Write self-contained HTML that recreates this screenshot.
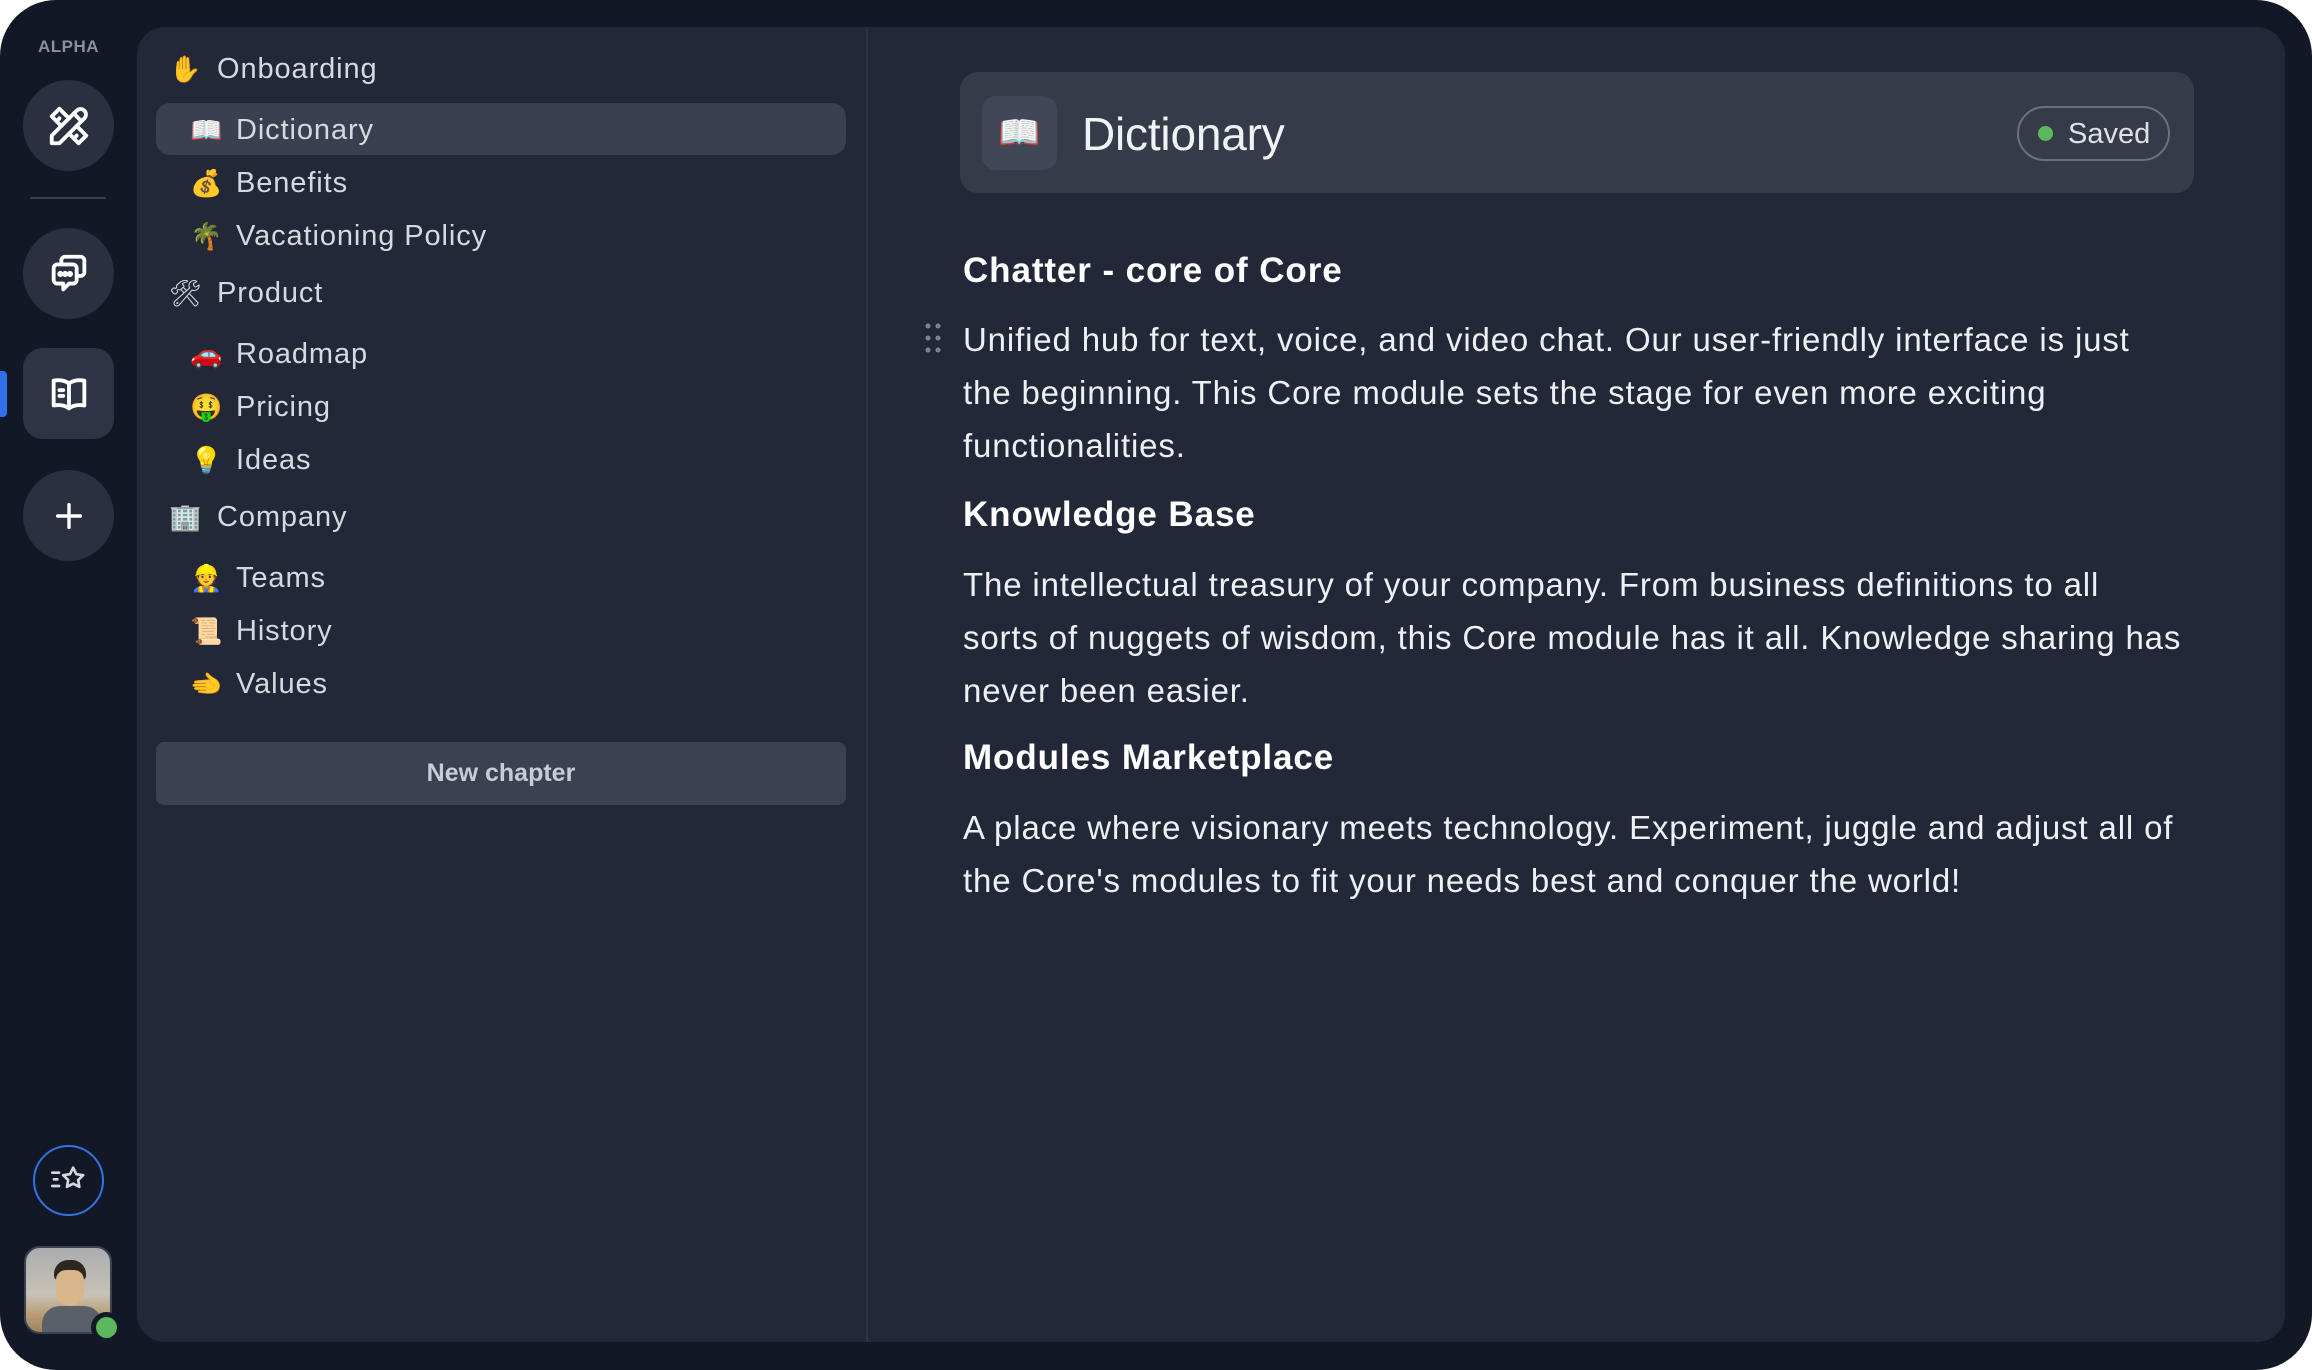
<!DOCTYPE html>
<html><head><meta charset="utf-8"><style>
*{margin:0;padding:0;box-sizing:border-box}
html,body{width:2312px;height:1370px;background:#fff;overflow:hidden}
body{font-family:"Liberation Sans","Noto Sans CJK JP",sans-serif}
#frame{position:absolute;left:0;top:0;width:2312px;height:1370px;background:#121826;border-radius:56px}
.abs{position:absolute}
#panel{left:137px;top:27px;width:2148px;height:1315px;background:#222837;border-radius:28px}
#divider{left:866px;top:27px;width:2px;height:1315px;background:#2c3242}
.rbtn{position:absolute;left:23px;width:91px;height:91px;border-radius:50%;background:#2a3040;display:flex;align-items:center;justify-content:center}
.it{position:absolute;font-size:29px;color:#d6d9df;white-space:nowrap;line-height:40px;letter-spacing:0.9px}
.it .e{position:absolute;font-size:26px;letter-spacing:0}
.sub .e{left:-46px}
.top .e{left:-48px}
.txt{position:absolute;left:963px;color:#eef0f3;white-space:nowrap;font-size:33px;letter-spacing:0.85px;line-height:53px}
.h{position:absolute;left:963px;color:#fff;font-weight:bold;font-size:35px;letter-spacing:0.9px;white-space:nowrap;line-height:44px}
</style></head><body>
<div id="frame"></div>
<div class="abs" id="panel"></div>
<div class="abs" id="divider"></div>

<div class="abs" style="left:0;top:37px;width:137px;text-align:center;font-size:17px;font-weight:bold;color:#8b909c;letter-spacing:0.5px">ALPHA</div>
<div class="rbtn" style="top:80px">
<svg width="46" height="46" viewBox="0 0 24 24" fill="none" stroke="#fff" stroke-width="2" stroke-linecap="round" stroke-linejoin="round"><path d="M3 21h4l13-13a1.5 1.5 0 0 0-4-4l-13 13v4"/><path d="M14.5 5.5l4 4"/><path d="M12 8l-5-5l-4 4l5 5"/><path d="M7 8l-1.5 1.5"/><path d="M16 12l5 5l-4 4l-5-5"/><path d="M16 17l-1.5 1.5"/></svg></div>
<div class="abs" style="left:30px;top:197px;width:76px;height:2px;background:#3a4050"></div>
<div class="rbtn" style="top:228px">
<svg width="46" height="46" viewBox="0 0 24 24" fill="none" stroke="#fff" stroke-width="2" stroke-linecap="round" stroke-linejoin="round"><path d="M8 6V5a2 2 0 0 1 2-2h8a2 2 0 0 1 2 2v6a2 2 0 0 1-2 2h-1"/><path d="M4 9a2 2 0 0 1 2-2h8a2 2 0 0 1 2 2v6a2 2 0 0 1-2 2h-2l-3 3v-3H6a2 2 0 0 1-2-2z"/><circle cx="7.5" cy="12" r=".6" fill="#fff"/><circle cx="10" cy="12" r=".6" fill="#fff"/><circle cx="12.5" cy="12" r=".6" fill="#fff"/></svg></div>
<div class="abs" style="left:0;top:371px;width:7px;height:46px;background:#2f6fe8;border-radius:0 4px 4px 0"></div>
<div class="rbtn" style="top:348px;border-radius:20px;background:#2d3446">
<svg width="46" height="46" viewBox="0 0 24 24" fill="none" stroke="#fff" stroke-width="2" stroke-linecap="round" stroke-linejoin="round"><path d="M12 6.5C10 5 7 4.5 4 5v13c3-.5 6 0 8 1.5 2-1.5 5-2 8-1.5V5c-3-.5-6 0-8 1.5z"/><path d="M12 6.5v13"/><path d="M7 10h2M7 13h2"/></svg></div>
<div class="rbtn" style="top:470px">
<svg width="34" height="34" viewBox="0 0 24 24" fill="none" stroke="#fff" stroke-width="2.4" stroke-linecap="round"><path d="M12 4v16M4 12h16"/></svg></div>

<div class="abs" style="left:33px;top:1145px;width:71px;height:71px;border-radius:50%;border:2px solid #3471e6;display:flex;align-items:center;justify-content:center">
<svg width="40" height="40" viewBox="0 0 24 24" fill="none" stroke="#d5d8de" stroke-width="1.6" stroke-linecap="round" stroke-linejoin="round"><path d="M14.5 4l1.9 3.9 4.1.6-3 2.9.7 4.1-3.7-1.9-3.7 1.9.7-4.1-3-2.9 4.1-.6z"/><path d="M2 7h4M3 11h2M2 15h4"/></svg></div>
<div class="abs" style="left:24px;top:1246px;width:88px;height:88px;border-radius:16px;border:2px solid #3a4252;overflow:hidden;background:linear-gradient(180deg,#a9acb0 0%,#c8c2b6 55%,#b89c72 80%,#9c8460 100%)">
<div class="abs" style="left:28px;top:12px;width:32px;height:20px;border-radius:14px 14px 4px 4px;background:#2e2620"></div>
<div class="abs" style="left:30px;top:22px;width:28px;height:36px;border-radius:10px 10px 14px 14px;background:#d9b58c"></div>
<div class="abs" style="left:16px;top:58px;width:60px;height:34px;border-radius:18px 18px 0 0;background:#5a5e66"></div>
</div>
<div class="abs" style="left:91px;top:1312px;width:31px;height:31px;border-radius:50%;background:#121826"></div>
<div class="abs" style="left:96px;top:1317px;width:21px;height:21px;border-radius:50%;background:#5cb85c"></div>

<!-- sidebar -->
<div class="abs" style="left:156px;top:103px;width:690px;height:52px;border-radius:14px;background:#394050"></div>
<div class="it top" style="left:217px;top:49px"><span class="e">✋</span>Onboarding</div>
<div class="it sub" style="left:236px;top:110px"><span class="e">📖</span>Dictionary</div>
<div class="it sub" style="left:236px;top:163px"><span class="e">💰</span>Benefits</div>
<div class="it sub" style="left:236px;top:216px"><span class="e">🌴</span>Vacationing Policy</div>
<div class="it top" style="left:217px;top:273px"><span class="e">🛠</span>Product</div>
<div class="it sub" style="left:236px;top:334px"><span class="e">🚗</span>Roadmap</div>
<div class="it sub" style="left:236px;top:387px"><span class="e">🤑</span>Pricing</div>
<div class="it sub" style="left:236px;top:440px"><span class="e">💡</span>Ideas</div>
<div class="it top" style="left:217px;top:497px"><span class="e">🏢</span>Company</div>
<div class="it sub" style="left:236px;top:558px"><span class="e">👷</span>Teams</div>
<div class="it sub" style="left:236px;top:611px"><span class="e">📜</span>History</div>
<div class="it sub" style="left:236px;top:664px"><span class="e">🫲</span>Values</div>
<div class="abs" style="left:156px;top:742px;width:690px;height:63px;border-radius:8px;background:#3a4151;color:#c9ccd4;font-size:25px;font-weight:bold;text-align:center;line-height:63px">New chapter</div>

<!-- main -->
<div class="abs" style="left:960px;top:72px;width:1234px;height:121px;border-radius:18px;background:#353b48"></div>
<div class="abs" style="left:982px;top:96px;width:75px;height:74px;border-radius:14px;background:#404756;text-align:center;line-height:74px;font-size:34px">📖</div>
<div class="abs" style="left:1082px;top:106px;font-size:46px;color:#f1f2f5;line-height:56px;letter-spacing:-0.2px">Dictionary</div>
<div class="abs" style="left:2017px;top:106px;width:153px;height:55px;border-radius:28px;border:2px solid #6a7080"></div>
<div class="abs" style="left:2038px;top:126px;width:15px;height:15px;border-radius:50%;background:#5cb85c"></div>
<div class="abs" style="left:2068px;top:114px;font-size:29px;color:#dfe1e6;line-height:40px">Saved</div>

<div class="h" style="top:249px">Chatter - core of Core</div>
<svg class="abs" style="left:924px;top:322px" width="18" height="32" viewBox="0 0 18 32"><g fill="#7d8391"><circle cx="4" cy="4" r="2.5"/><circle cx="14" cy="4" r="2.5"/><circle cx="4" cy="16" r="2.5"/><circle cx="14" cy="16" r="2.5"/><circle cx="4" cy="28" r="2.5"/><circle cx="14" cy="28" r="2.5"/></g></svg>
<div class="txt" style="top:313px">Unified hub for text, voice, and video chat. Our user-friendly interface is just<br>the beginning. This Core module sets the stage for even more exciting<br>functionalities.</div>
<div class="h" style="top:493px">Knowledge Base</div>
<div class="txt" style="top:558px">The intellectual treasury of your company. From business definitions to all<br>sorts of nuggets of wisdom, this Core module has it all. Knowledge sharing has<br>never been easier.</div>
<div class="h" style="top:736px">Modules Marketplace</div>
<div class="txt" style="top:801px">A place where visionary meets technology. Experiment, juggle and adjust all of<br>the Core's modules to fit your needs best and conquer the world!</div>
</body></html>
